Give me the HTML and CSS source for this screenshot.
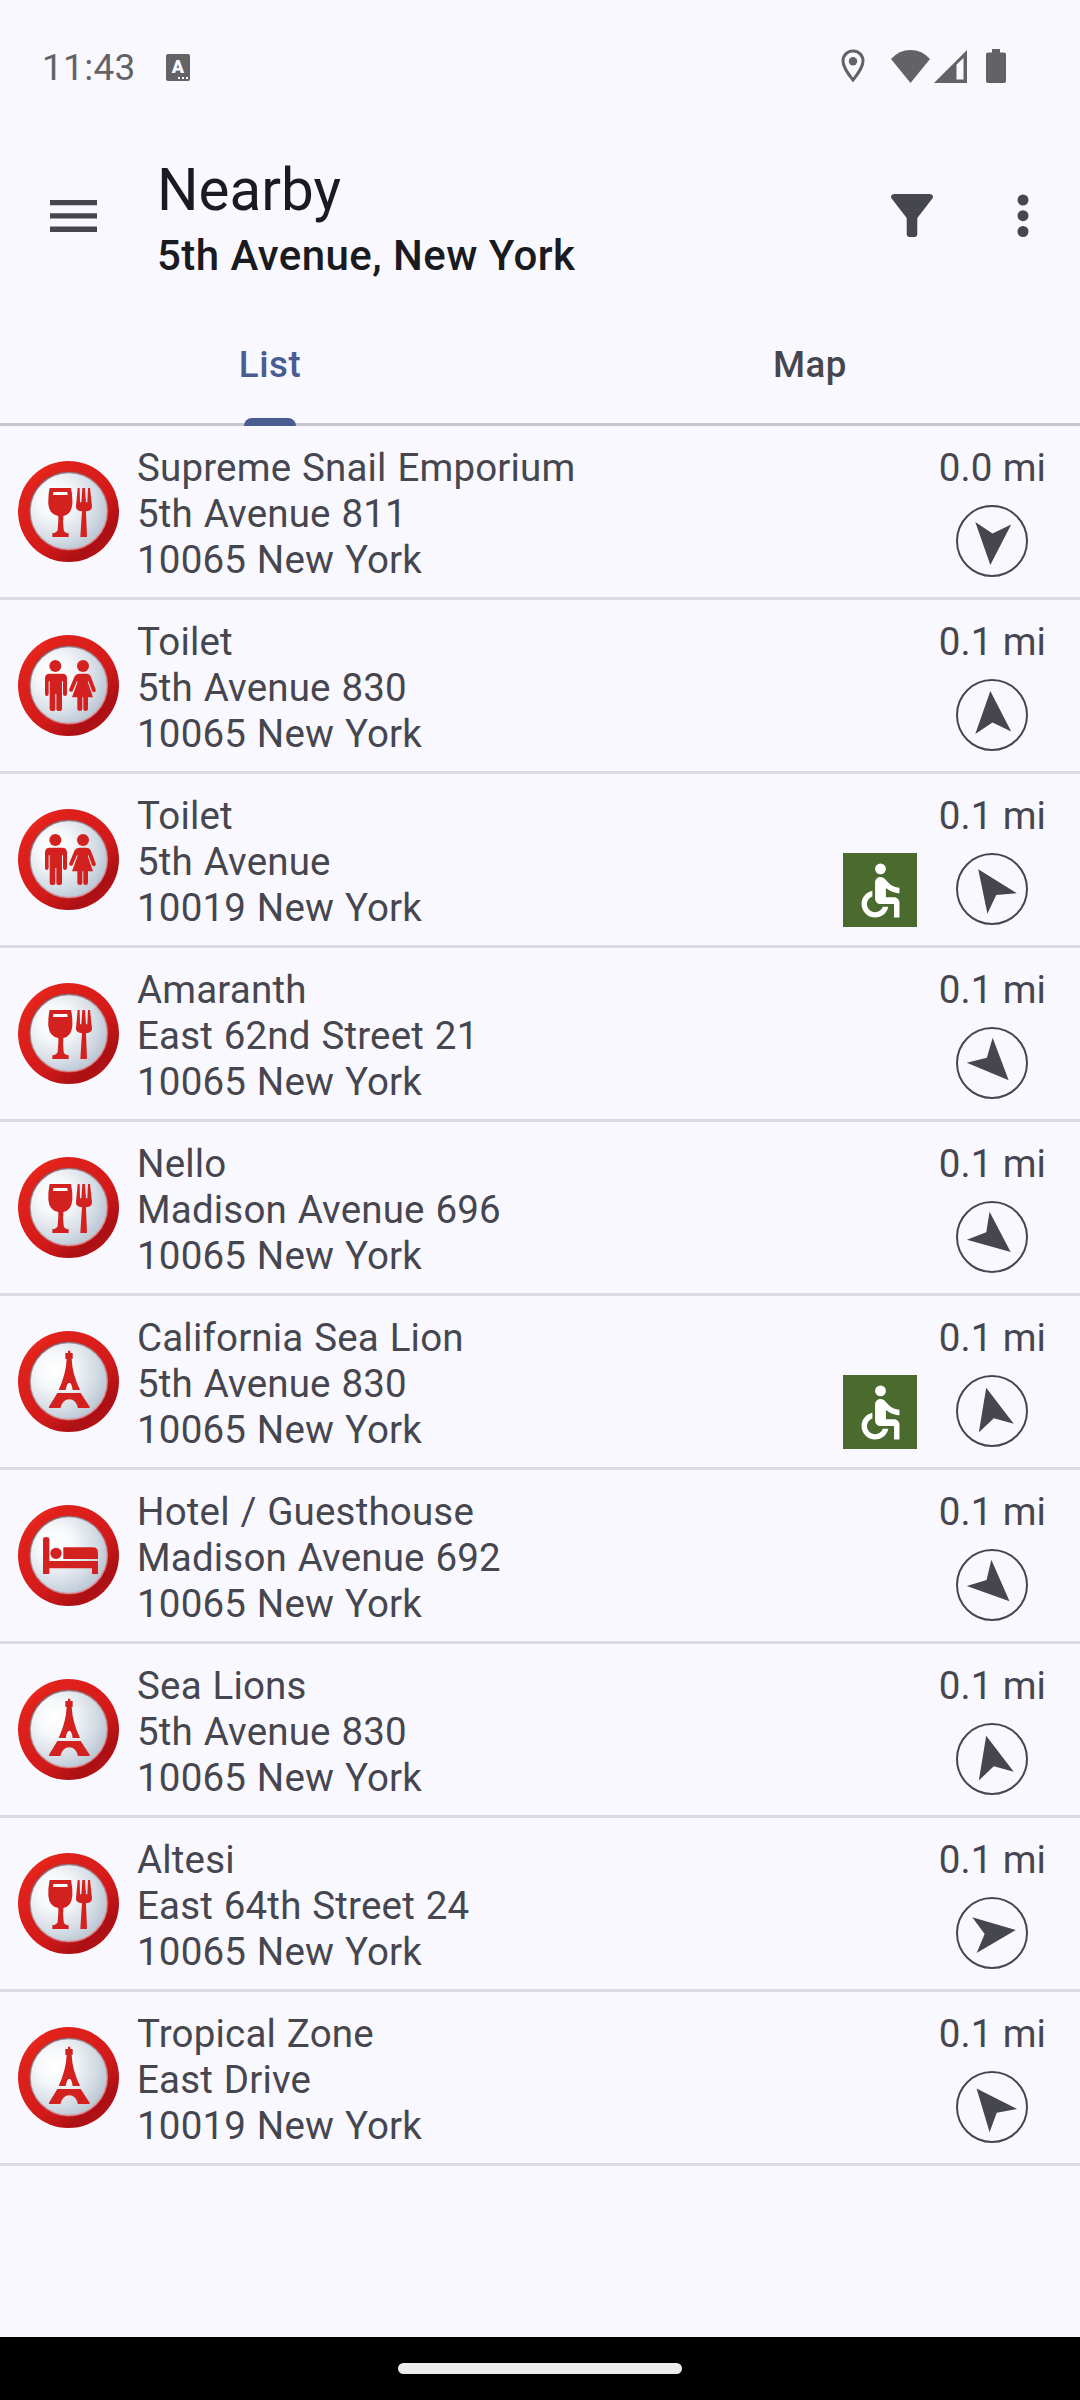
FILE: index.html
```html
<!DOCTYPE html>
<html lang="en">
<head>
<meta charset="utf-8">
<title>Nearby</title>
<link rel="stylesheet" href="styles.css">
</head>
<body>
<svg class="defs" width="0" height="0" aria-hidden="true">
  <defs>
    <linearGradient id="ring" x1="0.15" y1="0.1" x2="0.85" y2="0.9">
      <stop offset="0" stop-color="#f0281e"/><stop offset="0.1" stop-color="#e0221b"/>
      <stop offset="0.6" stop-color="#d41a1a"/><stop offset="0.88" stop-color="#ab1014"/><stop offset="1" stop-color="#b41417"/>
    </linearGradient>
    <radialGradient id="face" cx="0.33" cy="0.36" r="0.75">
      <stop offset="0" stop-color="#ffffff"/><stop offset="0.3" stop-color="#f6f8fa"/>
      <stop offset="0.7" stop-color="#d3dbe4"/><stop offset="1" stop-color="#b4c1cf"/>
    </radialGradient>
    <linearGradient id="rim" x1="0.2" y1="0.1" x2="0.8" y2="0.9">
      <stop offset="0" stop-color="#70505a" stop-opacity="0.75"/><stop offset="0.5" stop-color="#a06a70" stop-opacity="0.5"/>
      <stop offset="1" stop-color="#f08080" stop-opacity="0.7"/>
    </linearGradient>
  </defs>
  <symbol id="badge" viewBox="54 93 303 303">
    <circle cx="205.5" cy="244.5" r="151.5" fill="url(#ring)"/>
    <circle cx="206" cy="243" r="117" fill="url(#face)"/>
    <circle cx="206" cy="243" r="116" fill="none" stroke="url(#rim)" stroke-width="5"/>
  </symbol>
  <symbol id="food" viewBox="54 93 303 303">
    <use href="#badge" x="54" y="93" width="303" height="303"/>
    <g fill="#d3211f">
      <path fill-rule="evenodd" d="M149 174H213Q218 195 217 222Q214 254 190 258V271H189L191 300Q193 309 206 310V321H157V310Q170 309 173 300L175 271V258Q148 254 145 222Q144 195 149 174ZM160 186L159 195H203L202 186Z"/>
      <path d="M233 174H239L240 217H244L247 174H255L258 217H262L264 174H270L276 229Q277 242 258 244L261 321H241L246 244Q227 242 228 229Z"/>
    </g>
  </symbol>
  <symbol id="toilet" viewBox="54 93 303 303">
    <use href="#badge" x="54" y="93" width="303" height="303"/>
    <g fill="#d3211f">
      <circle cx="166" cy="186" r="18"/>
      <path d="M149 209H187Q201 209 201 224V269Q201 276 195 276Q189 276 189 269V232H186V314Q186 321 177 321Q169 321 169 314V270H166V314Q166 321 158 321Q149 321 149 314V232H146V269Q146 276 140 276Q135 276 135 269V224Q135 209 149 209Z"/>
      <circle cx="249" cy="186" r="18"/>
      <path d="M238 209H260Q269 209 272 217L287 256Q289 263 283 265Q278 265 276 260L265 231L263 233L279 280H264V315Q264 321 257 321Q250 321 250 315V280H247V315Q247 321 240 321Q232 321 232 315V280H216L233 233L231 231L219 259Q217 265 211 263Q206 261 208 255L224 217Q228 209 238 209Z"/>
    </g>
  </symbol>
  <symbol id="sight" viewBox="54 93 303 303">
    <use href="#badge" x="54" y="93" width="303" height="303"/>
    <g fill="#d3211f">
      <path d="M204 152H211V159H218V177H215Q217 222 240 270H218Q215 248 208 248Q201 248 197 270H176Q198 222 200 177H196V159H204Z"/>
      <path d="M172 279H242L269 320V324H234Q228 298 208 298Q188 298 181 324H147V320Z"/>
    </g>
  </symbol>
  <symbol id="hotel" viewBox="54 93 303 303">
    <use href="#badge" x="54" y="93" width="303" height="303"/>
    <g fill="#d3211f">
      <path d="M129 194Q129 189 138 189Q148 189 148 194V261H294V300H276V283H148V300H129Z"/>
      <circle cx="168" cy="238" r="17"/>
      <path d="M190 220H278Q294 220 294 236V255H190Z"/>
    </g>
  </symbol>
  <symbol id="arrow" viewBox="-37 -37 74 74"><path fill="#46464f" d="M0-24L18 17.7L0 7.4L-18 17.7Z"/></symbol>
  <symbol id="wheelchair" viewBox="0 0 24 24">
    <circle cx="12" cy="4" r="2"/>
    <path d="M19 13v-2c-1.54.02-3.09-.75-4.07-1.83l-1.29-1.43c-.17-.19-.38-.34-.61-.45-.01 0-.01-.01-.02-.01H13c-.35-.2-.75-.3-1.19-.26C10.76 7.11 10 8.04 10 9.09V15c0 1.1.9 2 2 2h5v5h2v-5.5c0-1.1-.9-2-2-2h-3v-3.45c1.29 1.07 3.25 1.94 5 1.95zm-6.17 5c-.41 1.16-1.52 2-2.83 2-1.66 0-3-1.34-3-3 0-1.31.84-2.41 2-2.83V12.1c-2.28.46-4 2.48-4 4.9 0 2.76 2.24 5 5 5 2.42 0 4.44-1.72 4.9-4h-2.07z"/>
  </symbol>
</svg>

<div class="screen">
  <header class="status">
    <span class="clock">11:43</span>
    <span class="lang"><b>A</b><i></i><i></i><i></i></span>
    <svg class="s-pin" width="24" height="34" viewBox="0 0 24 34"><path d="M12 2C6.2 2 2 6.4 2 12C2 19 12 31 12 31S22 19 22 12C22 6.4 17.8 2 12 2Z" fill="none" stroke="#636366" stroke-width="3"/><circle cx="12" cy="12.3" r="4.2" fill="#636366"/></svg>
    <svg class="s-wifi" width="39" height="33" viewBox="0 0 39 33"><path d="M0 9Q8 0 19.5 0T39 9L19.5 33Z" fill="#636366"/></svg>
    <svg class="s-cell" width="33" height="33" viewBox="0 0 33 33"><path fill-rule="evenodd" d="M0 33L33 0V33ZM22.5 14.5V29.5H29.5V8Z" fill="#636366"/></svg>
    <svg class="s-bat" width="20" height="34" viewBox="0 0 20 34"><path d="M6 0H14V3.5H18Q20 3.5 20 5.5V32Q20 34 18 34H2Q0 34 0 32V5.5Q0 3.5 2 3.5H6Z" fill="#636366"/></svg>
  </header>

  <div class="appbar">
    <svg class="menu" width="47" height="32" viewBox="0 0 47 32"><path d="M0 0H47V5.3H0ZM0 13.3H47V18.6H0ZM0 26.6H47V31.9H0Z" fill="#46464f"/></svg>
    <div class="titles">
      <h1>Nearby</h1>
      <h2>5th Avenue, New York</h2>
    </div>
    <svg class="filter" width="42" height="43" viewBox="0 0 42 43"><path d="M3 0H39Q42 .5 42 3Q42 4 41 5L26.3 24V40Q26.3 43 23.300 43H18.700Q15.700 43 15.700 40V24L1 5Q0 4 0 3Q0 .5 3 0Z" fill="#46464f"/></svg>
    <svg class="more" width="12" height="44" viewBox="0 0 12 44"><g fill="#46464f"><circle cx="6" cy="6" r="5.500"/><circle cx="6" cy="21.700" r="5.500"/><circle cx="6" cy="37.500" r="5.500"/></g></svg>
  </div>

  <nav class="tabs">
    <div class="tab active">List</div>
    <div class="tab">Map</div>
  </nav>

  <main class="list">
    <div class="row"><svg class="cat"><use href="#food"/></svg><div class="text"><p>Supreme Snail Emporium</p><p>5th Avenue 811</p><p>10065 New York</p></div><div class="side"><span class="dist">0.0 mi</span><div class="marks"><span class="compass"><svg style="transform:rotate(184deg)"><use href="#arrow"/></svg></span></div></div></div>
    <div class="row"><svg class="cat"><use href="#toilet"/></svg><div class="text"><p>Toilet</p><p>5th Avenue 830</p><p>10065 New York</p></div><div class="side"><span class="dist">0.1 mi</span><div class="marks"><span class="compass"><svg style="transform:rotate(-4deg)"><use href="#arrow"/></svg></span></div></div></div>
    <div class="row"><svg class="cat"><use href="#toilet"/></svg><div class="text"><p>Toilet</p><p>5th Avenue</p><p>10019 New York</p></div><div class="side"><span class="dist">0.1 mi</span><div class="marks"><span class="access"><svg><use href="#wheelchair"/></svg></span><span class="compass"><svg style="transform:rotate(-35deg)"><use href="#arrow"/></svg></span></div></div></div>
    <div class="row"><svg class="cat"><use href="#food"/></svg><div class="text"><p>Amaranth</p><p>East 62nd Street 21</p><p>10065 New York</p></div><div class="side"><span class="dist">0.1 mi</span><div class="marks"><span class="compass"><svg style="transform:rotate(136deg)"><use href="#arrow"/></svg></span></div></div></div>
    <div class="row"><svg class="cat"><use href="#food"/></svg><div class="text"><p>Nello</p><p>Madison Avenue 696</p><p>10065 New York</p></div><div class="side"><span class="dist">0.1 mi</span><div class="marks"><span class="compass"><svg style="transform:rotate(129deg)"><use href="#arrow"/></svg></span></div></div></div>
    <div class="row"><svg class="cat"><use href="#sight"/></svg><div class="text"><p>California Sea Lion</p><p>5th Avenue 830</p><p>10065 New York</p></div><div class="side"><span class="dist">0.1 mi</span><div class="marks"><span class="access"><svg><use href="#wheelchair"/></svg></span><span class="compass"><svg style="transform:rotate(-14deg)"><use href="#arrow"/></svg></span></div></div></div>
    <div class="row"><svg class="cat"><use href="#hotel"/></svg><div class="text"><p>Hotel / Guesthouse</p><p>Madison Avenue 692</p><p>10065 New York</p></div><div class="side"><span class="dist">0.1 mi</span><div class="marks"><span class="compass"><svg style="transform:rotate(133deg)"><use href="#arrow"/></svg></span></div></div></div>
    <div class="row"><svg class="cat"><use href="#sight"/></svg><div class="text"><p>Sea Lions</p><p>5th Avenue 830</p><p>10065 New York</p></div><div class="side"><span class="dist">0.1 mi</span><div class="marks"><span class="compass"><svg style="transform:rotate(-14deg)"><use href="#arrow"/></svg></span></div></div></div>
    <div class="row"><svg class="cat"><use href="#food"/></svg><div class="text"><p>Altesi</p><p>East 64th Street 24</p><p>10065 New York</p></div><div class="side"><span class="dist">0.1 mi</span><div class="marks"><span class="compass"><svg style="transform:rotate(83deg)"><use href="#arrow"/></svg></span></div></div></div>
    <div class="row"><svg class="cat"><use href="#sight"/></svg><div class="text"><p>Tropical Zone</p><p>East Drive</p><p>10019 New York</p></div><div class="side"><span class="dist">0.1 mi</span><div class="marks"><span class="compass"><svg style="transform:rotate(-40deg)"><use href="#arrow"/></svg></span></div></div></div>
  </main>

  <footer class="gesture"><span class="pill"></span></footer>
</div>
</body>
</html>
```
FILE: styles.css
```css
* { box-sizing: border-box; }
body { margin: 0; background: #faf8ff; font-family: Roboto, sans-serif; color: #46464f; }
svg { display: block; flex: none; }
.defs { position: absolute; }
h1, h2, p { margin: 0; font-weight: 400; white-space: nowrap; }

.screen { width: 1080px; height: 2400px; display: flex; flex-direction: column; overflow: hidden; }

.status { height: 132px; display: flex; align-items: center; padding: 0 74px 0 42px; color: #636366; }
.clock { font-size: 37px; line-height: 44px; letter-spacing: 0.3px; width: 124px; padding-top: 4px; }
.lang { width: 24px; height: 27px; margin-top: 2px; border-radius: 2px; background: #636366; position: relative;
  display: flex; gap: 2px; align-items: flex-end; justify-content: flex-end; padding: 0 2px 2px 0; }
.lang b { position: absolute; left: 0; top: 4px; width: 24px; text-align: center; font-size: 18px; line-height: 18px; font-weight: 900; color: #faf8ff; }
.lang i { width: 2px; height: 2px; background: #faf8ff; }
.s-pin { margin-left: auto; }
.s-wifi { margin-left: 26px; }
.s-cell { margin: 0 0 0 4px; }
.s-bat { margin-left: 19px; }

.appbar { height: 170px; display: flex; align-items: center; padding: 0 51px 3px 50px; }
.titles { margin-left: 60px; flex: 1; align-self: flex-start; color: #1a1b21; }
.titles h1 { font-size: 58.300px; line-height: 68px; margin-top: 24px; }
.titles h2 { font-size: 42px; line-height: 48px; font-weight: 500; letter-spacing: 0.450px; margin-top: 8px; }
.more { margin-left: 84px; }

.tabs { height: 124px; display: flex; border-bottom: 3px solid #c6c6d0; }
.tab { flex: 1; display: flex; justify-content: center; position: relative; font-size: 36.700px; line-height: 44px; font-weight: 500; letter-spacing: 0.500px; padding-top: 41px; }
.tab.active { color: #495d92; }
.tab.active::after { content: ""; position: absolute; left: 244px; bottom: -3px; width: 52px; height: 8px; border-radius: 8px 8px 0 0; background: #495d92; }

.list { flex: 1; }
.row { height: 174px; display: flex; border-bottom: 3px solid #dadae2; }
.cat { width: 101px; height: 101px; margin: 35px 18px 0; }
.text { flex: 1; padding-top: 19px; font-size: 38.500px; line-height: 46px; letter-spacing: 0.180px; word-spacing: 1px; }
.side { display: flex; flex-direction: column; align-items: flex-end; padding: 19px 34px 0 0; }
.dist { font-size: 38.500px; line-height: 46px; white-space: nowrap; letter-spacing: 0.100px; word-spacing: 0.500px; }
.marks { display: flex; gap: 39px; margin: 14px 18px 0 0; }
.access { width: 74px; height: 74px; background: #4b6a2e; display: flex; align-items: center; justify-content: center; }
.access svg { width: 65px; height: 65px; fill: #fff; }
.compass { width: 72px; height: 72px; border: 2px solid #46464f; border-radius: 50%; display: flex; align-items: center; justify-content: center; }
.compass svg { width: 74px; height: 74px; }

.gesture { height: 63px; background: #000; display: flex; justify-content: center; align-items: flex-start; padding-top: 26px; }
.pill { width: 284px; height: 11px; border-radius: 6px; background: #ececec; }
```
